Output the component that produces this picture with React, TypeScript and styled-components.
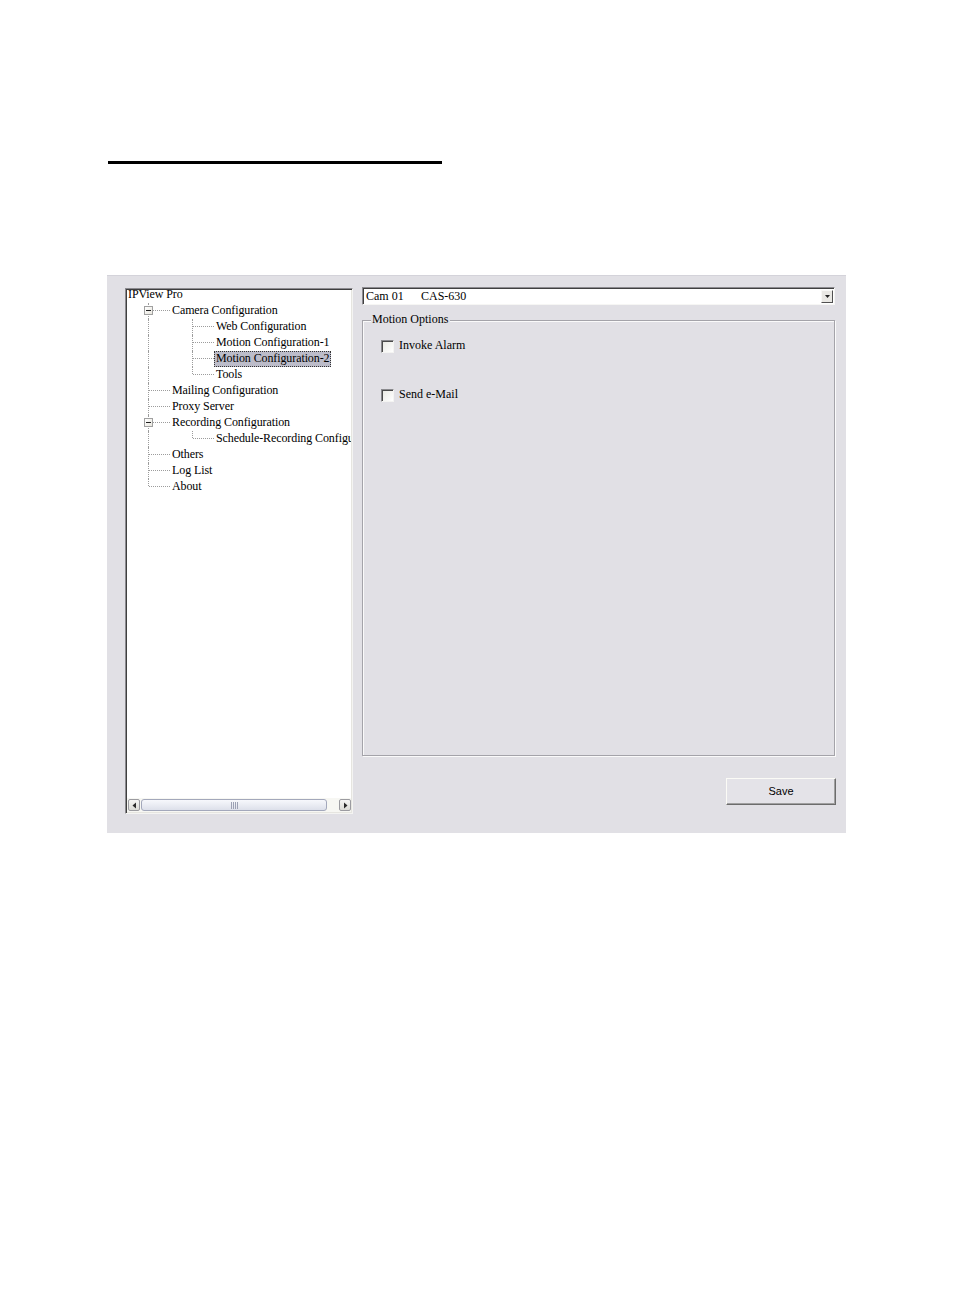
import * as React from 'react'
import styled, { createGlobalStyle, css } from 'styled-components'

type Guide = 'pipe' | 'tee' | 'elbow'

interface TreeItem {
  label: string
  guides: Guide[]
  expander?: boolean
  selected?: boolean
}

const treeItems: TreeItem[] = [
  { label: 'IPView Pro', guides: [] },
  { label: 'Camera Configuration', guides: ['tee'], expander: true },
  { label: 'Web Configuration', guides: ['pipe', 'tee'] },
  { label: 'Motion Configuration-1', guides: ['pipe', 'tee'] },
  { label: 'Motion Configuration-2', guides: ['pipe', 'tee'], selected: true },
  { label: 'Tools', guides: ['pipe', 'elbow'] },
  { label: 'Mailing Configuration', guides: ['tee'] },
  { label: 'Proxy Server', guides: ['tee'] },
  { label: 'Recording Configuration', guides: ['tee'], expander: true },
  { label: 'Schedule-Recording Configuration', guides: ['pipe', 'elbow'] },
  { label: 'Others', guides: ['tee'] },
  { label: 'Log List', guides: ['tee'] },
  { label: 'About', guides: ['elbow'] }
]

const options = ['Invoke Alarm', 'Send e-Mail']

const App = () => {
  return (
    <Page>
      <GlobalStyle />
      <HeaderRule />
      <Window>
        <TreeBox>
          <TreeList>
            {treeItems.map(({ label, guides, expander, selected }, key) => (
              <TreeRow key={key}>
                {guides.map((guide, i) => (
                  <GuideCell key={i} $kind={guide}>
                    {expander && i === guides.length - 1 && <Expander />}
                  </GuideCell>
                ))}
                <NodeLabel $selected={selected}>{label}</NodeLabel>
              </TreeRow>
            ))}
          </TreeList>
          <HScroll>
            <ArrowButton>
              <svg width="7" height="7" viewBox="0 0 7 7">
                <path d="M5 0.5 L1.5 3.5 L5 6.5 Z" fill="#2b2b2b" />
              </svg>
            </ArrowButton>
            <Thumb>
              <Grip>
                <span />
                <span />
                <span />
                <span />
              </Grip>
            </Thumb>
            <ArrowButton>
              <svg width="7" height="7" viewBox="0 0 7 7">
                <path d="M2 0.5 L5.5 3.5 L2 6.5 Z" fill="#2b2b2b" />
              </svg>
            </ArrowButton>
          </HScroll>
        </TreeBox>

        <RightColumn>
          <Combo>
            <ComboText>
              <CamName>Cam 01</CamName>
              <span>CAS-630</span>
            </ComboText>
            <DropButton>
              <svg width="5" height="3" viewBox="0 0 5 3">
                <path d="M0 0 H5 L2.5 3 Z" fill="#222" />
              </svg>
            </DropButton>
          </Combo>

          <GroupBox>
            <Legend>Motion Options</Legend>
            <OptionList>
              {options.map((option) => (
                <OptionRow key={option}>
                  <CheckBox />
                  <OptionLabel>{option}</OptionLabel>
                </OptionRow>
              ))}
            </OptionList>
          </GroupBox>

          <SaveButton>Save</SaveButton>
        </RightColumn>
      </Window>
    </Page>
  )
}

export default App

const GlobalStyle = createGlobalStyle`
  html, body {
    margin: 0;
    padding: 0;
    background: #ffffff;
  }
  body {
    font-family: 'Liberation Serif', 'Times New Roman', serif;
  }
`

const Page = styled.div`
  width: 954px;
  min-height: 1311px;
  box-sizing: border-box;
  padding: 161px 0 0 107px;
`

const HeaderRule = styled.div`
  width: 334px;
  height: 3px;
  margin-left: 1px;
  background: #000;
`

const Window = styled.div`
  margin-top: 111px;
  width: 739px;
  height: 558px;
  box-sizing: border-box;
  padding: 11px 10px 0 18px;
  background: #e1e0e5;
  border-top: 1px solid #d4d3da;
  display: grid;
  grid-template-columns: 228px 474px;
  column-gap: 9px;
  align-items: start;
  font-family: 'Liberation Serif', 'Times New Roman', serif;
  font-size: 12px;
  color: #000;
`

const TreeBox = styled.div`
  margin-top: 1px;
  height: 526px;
  box-sizing: border-box;
  background: #fff;
  border: 1px solid;
  border-color: #8c8b90 #f4f4f2 #f4f4f2 #8c8b90;
  box-shadow: inset 1px 1px 0 #3f3f3f, inset -1px -1px 0 #e6e5e0;
  padding: 1px;
  display: flex;
  flex-direction: column;
  overflow: hidden;
`

/* the list is scrolled a couple of pixels, as in the original control */
const TreeList = styled.div`
  flex: 1;
  overflow: hidden;
  margin-top: -3px;
`

const TreeRow = styled.div`
  display: flex;
  align-items: stretch;
  height: 16px;
  white-space: nowrap;
`

const dotted = '1px dotted #9c9c9c'

const GuideCell = styled.div<{ $kind: Guide }>`
  position: relative;
  flex: 0 0 44px;
  width: 44px;

  &::before {
    content: '';
    position: absolute;
    left: 21px;
    top: 0;
    border-left: ${dotted};
    ${({ $kind }) =>
      $kind === 'elbow'
        ? css`
            height: 7px;
          `
        : css`
            bottom: 0;
          `}
  }

  ${({ $kind }) =>
    $kind !== 'pipe' &&
    css`
      &::after {
        content: '';
        position: absolute;
        left: 22px;
        right: 1px;
        top: 7px;
        border-top: ${dotted};
      }
    `}
`

const Expander = styled.div`
  position: absolute;
  z-index: 1;
  left: 17px;
  top: 3px;
  width: 9px;
  height: 9px;
  box-sizing: border-box;
  border: 1px solid #a0a0a0;
  background: linear-gradient(135deg, #ffffff, #e8e6de);

  &::after {
    content: '';
    position: absolute;
    left: 1px;
    top: 3px;
    width: 5px;
    height: 1px;
    background: #1f1f1f;
  }
`

const NodeLabel = styled.span<{ $selected?: boolean }>`
  display: inline-block;
  height: 16px;
  line-height: 12px;
  padding: 0 1px;
  box-sizing: border-box;
  border: 1px solid transparent;
  margin-left: -1px;
  letter-spacing: -0.1px;
  ${({ $selected }) =>
    $selected &&
    css`
      background: #bcbcc9;
      border: 1px dotted #333;
    `}
`

const HScroll = styled.div`
  flex: 0 0 14px;
  display: flex;
  align-items: center;
  gap: 1px;
  background: #f7f7f3;
  padding: 0 1px;
`

const ArrowButton = styled.div`
  flex: 0 0 12px;
  height: 12px;
  box-sizing: border-box;
  border: 1px solid #9b9ba0;
  border-radius: 2px;
  background: linear-gradient(#f6f6f4, #dcdcd6);
  display: flex;
  align-items: center;
  justify-content: center;
`

const Thumb = styled.div`
  flex: 0 0 186px;
  height: 12px;
  margin-right: 11px;
  box-sizing: border-box;
  border: 1px solid #a3a8bb;
  border-radius: 3px;
  background: linear-gradient(#f7f8fc, #dde0ea);
  display: flex;
  align-items: center;
  justify-content: center;
`

const Grip = styled.div`
  display: flex;
  gap: 1px;

  span {
    width: 1px;
    height: 7px;
    background: #9ca1b4;
  }
`

const RightColumn = styled.div`
  display: flex;
  flex-direction: column;
  align-items: stretch;
`

const Combo = styled.div`
  height: 18px;
  width: 473px;
  box-sizing: border-box;
  background: #fff;
  border: 1px solid;
  border-color: #8c8b90 #f6f6f4 #f6f6f4 #8c8b90;
  box-shadow: inset 1px 1px 0 #404040;
  display: flex;
  align-items: center;
  justify-content: space-between;
  padding: 0 1px 0 3px;
`

const ComboText = styled.div`
  display: flex;
  white-space: nowrap;
  line-height: 14px;
`

const CamName = styled.span`
  width: 55px;
`

const DropButton = styled.div`
  width: 12px;
  height: 13px;
  box-sizing: border-box;
  background: #e9e8e4;
  border: 1px solid;
  border-color: #f8f8f6 #505050 #505050 #f8f8f6;
  display: flex;
  align-items: center;
  justify-content: center;
`

const GroupBox = styled.div`
  position: relative;
  margin-top: 15px;
  width: 473px;
  height: 436px;
  box-sizing: border-box;
  border: 1px solid #a4a3a9;
  box-shadow: 1px 1px 0 #fafafa, inset 1px 1px 0 #fafafa;
`

const Legend = styled.span`
  position: absolute;
  left: 8px;
  top: -10px;
  padding: 0 2px 0 1px;
  line-height: 16px;
  background: #e1e0e5;
`

const OptionList = styled.div`
  display: flex;
  flex-direction: column;
  gap: 36px;
  padding: 19px 0 0 18px;
`

const OptionRow = styled.div`
  display: flex;
  align-items: center;
  gap: 5px;
  height: 13px;
`

const CheckBox = styled.div`
  width: 13px;
  height: 13px;
  box-sizing: border-box;
  border: 1px solid;
  border-color: #8a8a8e #f4f4f2 #f4f4f2 #8a8a8e;
  box-shadow: inset 1px 1px 0 #4a4a4a;
  background: linear-gradient(135deg, #e8e8e2, #ffffff);
`

const OptionLabel = styled.span`
  line-height: 11px;
  height: 13px;
  white-space: nowrap;
`

const SaveButton = styled.div`
  align-self: flex-end;
  margin-top: 22px;
  width: 110px;
  height: 27px;
  box-sizing: border-box;
  background: #e4e3e8;
  border: 1px solid;
  border-color: #fbfbf6 #6c6c6c #6c6c6c #fbfbf6;
  box-shadow: inset -1px -1px 0 #a0a0a0;
  display: flex;
  align-items: center;
  justify-content: center;
  padding-bottom: 2px;
  font-family: 'Liberation Sans', Arial, sans-serif;
  font-size: 11px;
`
